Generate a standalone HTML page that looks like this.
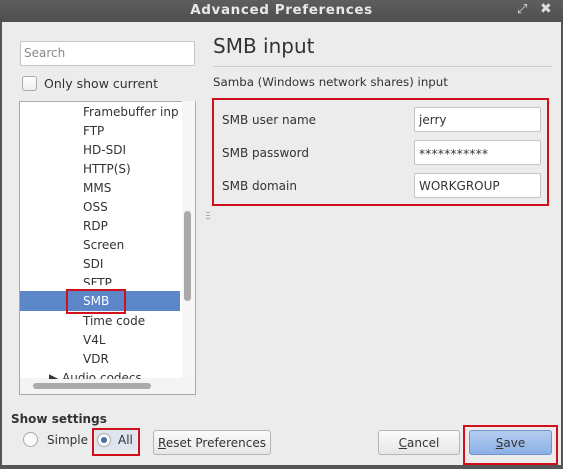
<!DOCTYPE html>
<html><head><style>
*{box-sizing:border-box;margin:0;padding:0}
body{width:563px;height:469px;overflow:hidden;background:#ececec;font-family:"DejaVu Sans","Liberation Sans",sans-serif;font-size:12px;color:#333;position:relative}
.a{position:absolute;white-space:nowrap}
.inp{position:absolute;background:#fff;border:1px solid #c4c4c4;border-radius:2px}
.btn{position:absolute;border:1px solid #b5b5b5;border-radius:3px;background:linear-gradient(#fbfbfb,#e6e6e6);text-align:center;line-height:25px;color:#333}
.red{position:absolute;border:2px solid #d0101a}
.li{position:absolute;left:83px;font-size:12px;color:#333;white-space:nowrap}
</style></head><body>
<div class="a" style="left:0;top:0;width:563px;height:22px;background:linear-gradient(#5e5e5e,#4f4f4f)"></div>
<div class="a" style="left:0;top:2px;width:563px;text-align:center;color:#e8e8e8;font-weight:bold;font-size:13.5px;letter-spacing:0.6px">Advanced Preferences</div>
<div class="a" style="left:517px;top:2px;color:#ddd;font-size:13px">⤢</div>
<div class="a" style="left:540px;top:1px;color:#ddd;font-size:14px;font-weight:bold">✖</div>
<div class="a" style="left:0;top:22px;width:2px;height:447px;background:#555"></div>
<div class="a" style="right:0;top:22px;width:2px;height:447px;background:#555"></div>
<div class="a" style="left:0;top:465px;width:563px;height:4px;background:#555"></div>

<div class="inp" style="left:20px;top:41px;width:175px;height:25px"></div>
<div class="a" style="left:24px;top:46px;color:#888">Search</div>
<div class="inp" style="left:22px;top:76px;width:15px;height:15px;border-radius:3px;border-color:#aaa;background:linear-gradient(#fff,#eee)"></div>
<div class="a" style="left:44px;top:76px;font-size:12.5px">Only show current</div>

<div class="a" style="left:19px;top:101px;width:177px;height:294px;background:#fff;border:1px solid #aaa;overflow:hidden">
<div class="a" style="left:0;top:189px;width:160px;height:20px;background:#5b87c8"></div>
</div>
<div class="a" style="left:182px;top:101px;width:13px;height:278px;background:#f6f6f6"></div>
<div class="a" style="left:184px;top:211px;width:7px;height:90px;background:#aaa;border-radius:4px"></div>
<div class="a" style="left:20px;top:378px;width:175px;height:16px;background:#f4f4f4"></div>
<div class="a" style="left:33px;top:383px;width:118px;height:6px;background:#aaa;border-radius:3px"></div>
<div class="li" style="top:105px;width:96px;overflow:hidden">Framebuffer input</div>
<div class="li" style="top:124px">FTP</div>
<div class="li" style="top:143px">HD-SDI</div>
<div class="li" style="top:162px">HTTP(S)</div>
<div class="li" style="top:181px">MMS</div>
<div class="li" style="top:200px">OSS</div>
<div class="li" style="top:219px">RDP</div>
<div class="li" style="top:238px">Screen</div>
<div class="li" style="top:257px">SDI</div>
<div class="li" style="top:276px;height:9px;overflow:hidden">SFTP</div>
<div class="li" style="top:294px;color:#fff">SMB</div>
<div class="li" style="top:314px">Time code</div>
<div class="li" style="top:333px">V4L</div>
<div class="li" style="top:352px">VDR</div>
<div class="a" style="left:49px;top:371px;height:8px;overflow:hidden;font-size:12px">▶ Audio codecs</div>
<div class="red" style="left:66px;top:289px;width:60px;height:25px"></div>

<div class="a" style="left:213px;top:34px;font-size:20px;color:#333">SMB input</div>
<div class="a" style="left:213px;top:66px;width:339px;height:1px;background:#ccc"></div>
<div class="a" style="left:213px;top:75px;font-size:11.8px">Samba (Windows network shares) input</div>
<div class="a" style="left:206px;top:212px;width:4px;height:1px;background:#aaa;box-shadow:0 3px #aaa,0 6px #aaa"></div>
<div class="red" style="left:212px;top:98px;width:337px;height:108px"></div>
<div class="a" style="left:222px;top:113px">SMB user name</div>
<div class="a" style="left:222px;top:146px">SMB password</div>
<div class="a" style="left:222px;top:179px">SMB domain</div>
<div class="inp" style="left:414px;top:107px;width:127px;height:25px"></div>
<div class="inp" style="left:414px;top:140px;width:127px;height:25px"></div>
<div class="inp" style="left:414px;top:173px;width:127px;height:25px"></div>
<div class="a" style="left:419px;top:113px">jerry</div>
<div class="a" style="left:419px;top:147px;letter-spacing:0.3px">***********</div>
<div class="a" style="left:419px;top:179px">WORKGROUP</div>

<div class="a" style="left:11px;top:412px;font-weight:bold">Show settings</div>
<div class="a" style="left:23px;top:432px;width:15px;height:15px;border-radius:50%;border:1px solid #aaa;background:#fafafa"></div>
<div class="a" style="left:47px;top:433px">Simple</div>
<div class="a" style="left:95px;top:430px;width:42px;height:20px;background:#dfe5ee"></div>
<div class="a" style="left:97px;top:433px;width:14px;height:14px;border-radius:50%;border:1px solid #aaa;background:#fafafa"></div>
<div class="a" style="left:101px;top:437px;width:6px;height:6px;border-radius:50%;background:#4a6da8"></div>
<div class="a" style="left:118px;top:433px">All</div>
<div class="red" style="left:92px;top:428px;width:48px;height:28px"></div>
<div class="btn" style="left:153px;top:430px;width:118px;height:25px"><u>R</u>eset Preferences</div>
<div class="btn" style="left:378px;top:430px;width:82px;height:25px"><u>C</u>ancel</div>
<div class="btn" style="left:469px;top:430px;width:83px;height:25px;background:linear-gradient(#b5cdf0,#8cb0e6);border-color:#7193c8"><u>S</u>ave</div>
<div class="red" style="left:463px;top:425px;width:95px;height:40px"></div>
</body></html>
